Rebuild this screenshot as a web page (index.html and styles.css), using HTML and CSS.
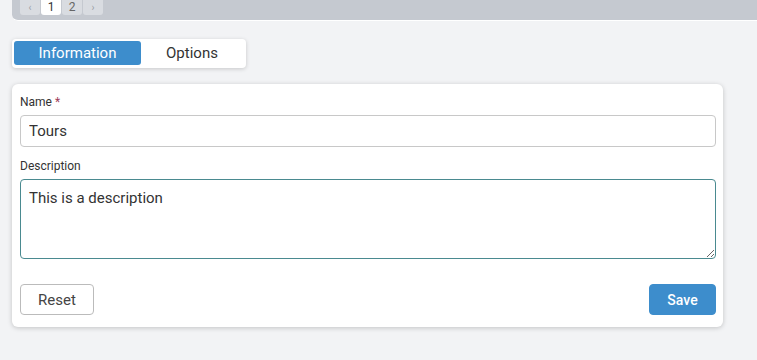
FILE: index.html
```html
<!DOCTYPE html>
<html lang="en">
  <head>
    <meta charset="UTF-8" />
    <title>Edit Category</title>
    <link rel="stylesheet" href="styles.css">
  </head>
  <body>
    <div class="topbar">
      <div class="pager">
        <button class="pg">&lsaquo;</button>
        <button class="pg active">1</button>
        <button class="pg">2</button>
        <button class="pg">&rsaquo;</button>
      </div>
    </div>

    <div class="content">
      <div class="tabs">
        <button class="tab active">Information</button>
        <button class="tab">Options</button>
      </div>

      <form class="card">
        <label class="label">Name <span class="req">*</span></label>
        <input class="field" type="text" value="Tours" />

        <label class="label">Description</label>
        <textarea class="field area">This is a description</textarea>

        <div class="actions">
          <button type="button" class="btn">Reset</button>
          <button type="button" class="btn primary">Save</button>
        </div>
      </form>
    </div>
  </body>
</html>
```

FILE: styles.css
```css
html,
body {
  margin: 0;
  padding: 0;
  height: 100%;
  overflow: hidden;
  background: #f2f3f5;
  font-family: Roboto, "Liberation Sans", sans-serif;
  color: #333;
}

.topbar {
  margin-left: 12px;
  height: 20px;
  background: #c5c9d0;
  border-bottom-left-radius: 6px;
  border-bottom: 1px solid #fff;
  padding-left: 8px;
}

.pager {
  display: flex;
  gap: 1px;
}

.pg {
  width: 20px;
  height: 15px;
  border: none;
  padding: 0;
  background: #d9dce1;
  color: #666;
  font-family: inherit;
  font-size: 12px;
  line-height: 15px;
  border-radius: 0 0 3px 3px;
}

.pg:first-child,
.pg:last-child {
  color: #9a9ea6;
  font-size: 10px;
}

.pg.active {
  background: #fff;
  color: #333;
}

.content {
  padding: 18px 34px 0 12px;
}

.tabs {
  display: inline-flex;
  background: #fff;
  padding: 2px 3px 3px 2px;
  border-radius: 4px;
  box-shadow: 0 1px 4px rgba(0, 0, 0, 0.18);
}

.tab {
  width: 127px;
  height: 24px;
  border: none;
  background: transparent;
  font-family: inherit;
  font-size: 15px;
  color: #333;
  border-radius: 3px;
  padding: 0;
}

.tab.active {
  background: #3d8dcc;
  color: #fff;
}

.tab + .tab {
  width: 102px;
}

.card {
  display: flex;
  flex-direction: column;
  margin-top: 16px;
  background: #fff;
  border-radius: 6px;
  box-shadow: 0 1px 5px rgba(0, 0, 0, 0.2);
  padding: 11px 7px 12px 8px;
}

.label {
  font-size: 12px;
  color: #333;
  line-height: 14px;
  margin-bottom: 6px;
}

.req {
  color: #a0405a;
}

.field {
  box-sizing: border-box;
  height: 32px;
  border: 1px solid #c8c8c8;
  border-radius: 4px;
  padding: 0 8px;
  font-family: inherit;
  font-size: 15px;
  color: #333;
  margin-bottom: 12px;
  outline: none;
}

.area {
  height: 80px;
  padding: 9px 8px;
  resize: vertical;
  border-color: #4a8a90;
  margin-bottom: 25px;
}

.actions {
  display: flex;
  justify-content: space-between;
}

.btn {
  height: 31px;
  padding: 0 17px;
  border: 1px solid #bbb;
  border-radius: 4px;
  background: #fff;
  color: #444;
  font-family: inherit;
  font-size: 15px;
}

.btn.primary {
  width: 67px;
  padding: 0;
  border-color: #3d8dcc;
  background: #3d8dcc;
  color: #fff;
  font-size: 14px;
  font-weight: 500;
}
```
